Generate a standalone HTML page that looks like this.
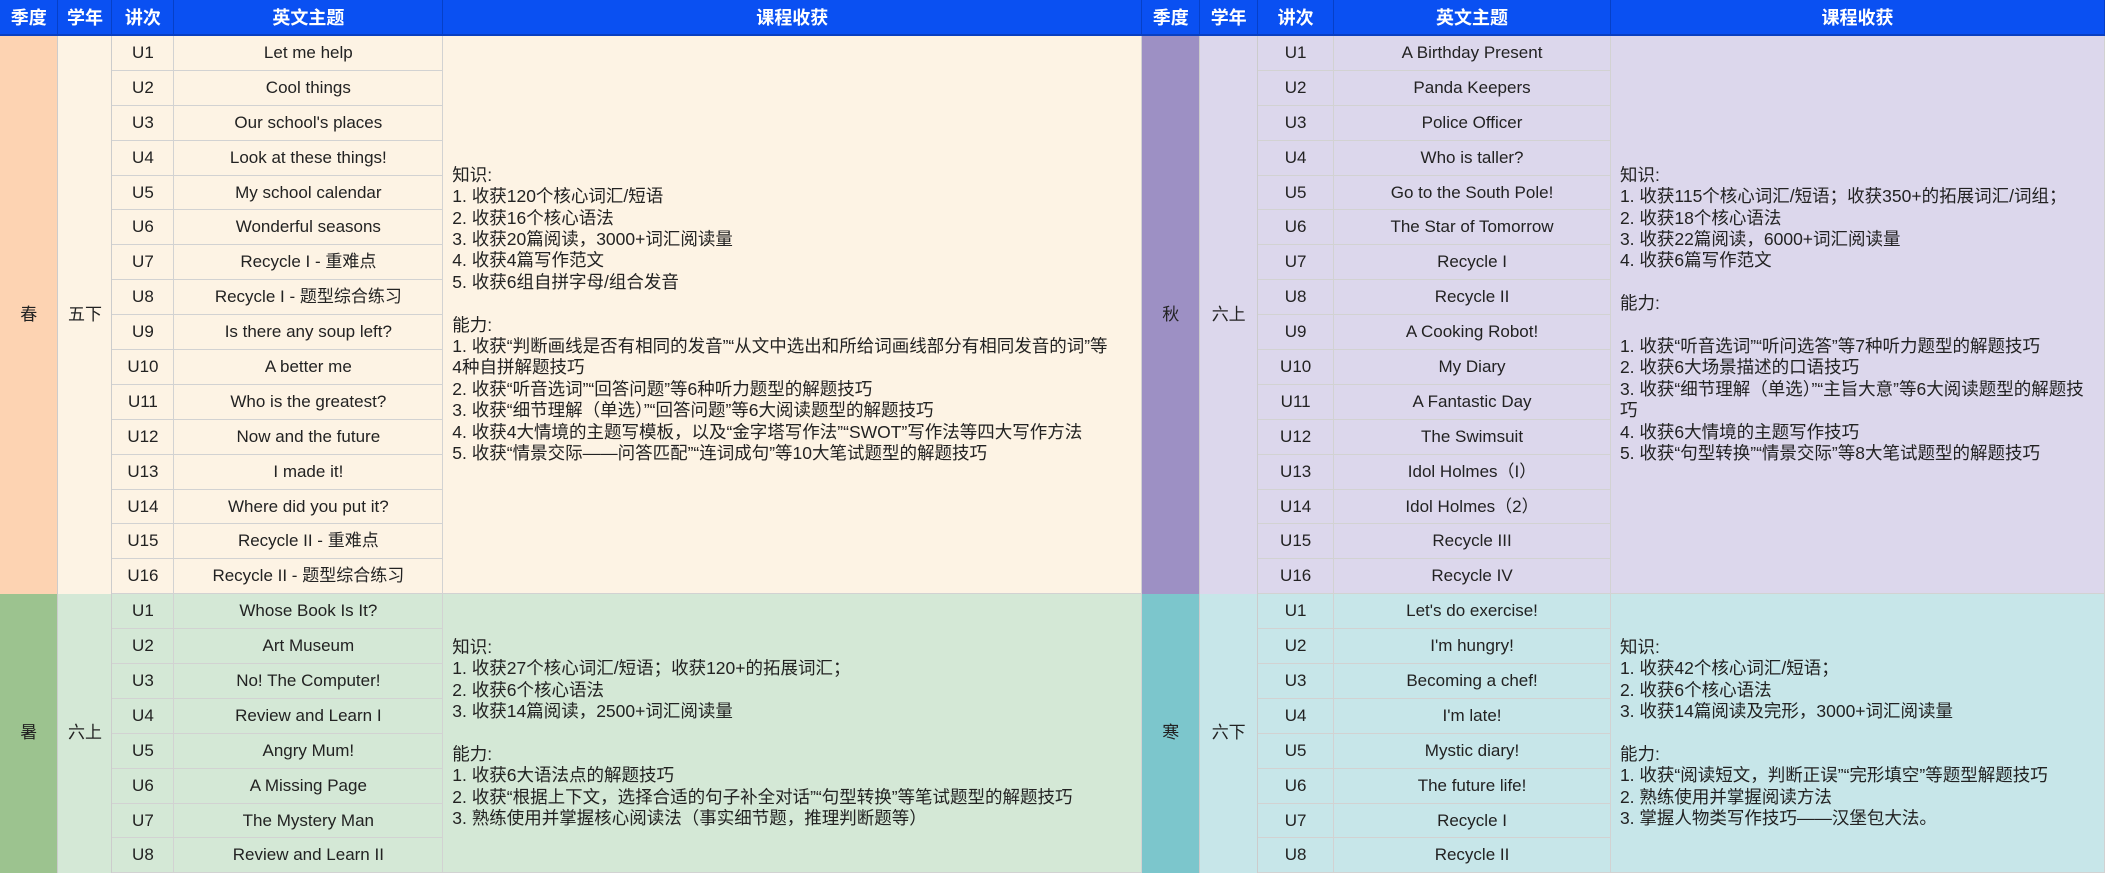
<!DOCTYPE html>
<html><head><meta charset="utf-8"><style>
html,body{margin:0;padding:0;width:2105px;height:873px;overflow:hidden;background:#fff}
table{border-collapse:collapse;table-layout:fixed;position:absolute;left:0;top:0;font-family:"Liberation Sans","Noto Sans CJK SC",sans-serif;font-size:17px;color:#222}
td,th{padding:0;text-align:center;vertical-align:middle;overflow:hidden;white-space:nowrap}
th{background:#0a50f2;color:#fff;font-weight:bold;font-size:18px;height:34px;border-right:1px solid #0640c8;border-bottom:2px solid #0a3fc0}
tr.r td{height:33.9px;line-height:20px;border:1px solid #d2d2d2}
tr.r td.h{text-align:left;padding-left:9px;line-height:21.4px;font-size:17.5px;white-space:nowrap;vertical-align:middle}
.sp{background:#fdf3e4}.sps{background:#fdd3b2}
.au{background:#dcd7ec}.aus{background:#9d90c4}
.su{background:#d4e8d6}.sus{background:#9cc38f}
.wi{background:#c7e6e9}.wis{background:#7cc6cc}
td.s{border:none!important;border-right:1px solid #ccc!important}
</style></head><body>
<table>
<colgroup><col style="width:58px"><col style="width:54px"><col style="width:62px"><col style="width:269px"><col style="width:699px"><col style="width:58px"><col style="width:58px"><col style="width:76px"><col style="width:277px"><col style="width:494px"></colgroup>
<tr><th>季度</th><th>学年</th><th>讲次</th><th>英文主题</th><th>课程收获</th><th>季度</th><th>学年</th><th>讲次</th><th>英文主题</th><th>课程收获</th></tr>
<tr class="r"><td rowspan="16" class="s sps">春</td><td rowspan="16" class="s sp">五下</td><td class="sp">U1</td><td class="sp">Let me help</td>
<td rowspan="16" class="h sp">知识:<br>1. 收获120个核心词汇/短语<br>2. 收获16个核心语法<br>3. 收获20篇阅读，3000+词汇阅读量<br>4. 收获4篇写作范文<br>5. 收获6组自拼字母/组合发音<br><br>能力:<br>1. 收获“判断画线是否有相同的发音”“从文中选出和所给词画线部分有相同发音的词”等<br>4种自拼解题技巧<br>2. 收获“听音选词”“回答问题”等6种听力题型的解题技巧<br>3. 收获“细节理解（单选）”“回答问题”等6大阅读题型的解题技巧<br>4. 收获4大情境的主题写模板，以及“金字塔写作法”“SWOT”写作法等四大写作方法<br>5. 收获“情景交际——问答匹配”“连词成句”等10大笔试题型的解题技巧</td>
<td rowspan="16" class="s aus">秋</td><td rowspan="16" class="s au">六上</td><td class="au">U1</td><td class="au">A Birthday Present</td>
<td rowspan="16" class="h au">知识:<br>1. 收获115个核心词汇/短语；收获350+的拓展词汇/词组；<br>2. 收获18个核心语法<br>3. 收获22篇阅读，6000+词汇阅读量<br>4. 收获6篇写作范文<br><br>能力:<br><br>1. 收获“听音选词”“听问选答”等7种听力题型的解题技巧<br>2. 收获6大场景描述的口语技巧<br>3. 收获“细节理解（单选）”“主旨大意”等6大阅读题型的解题技<br>巧<br>4. 收获6大情境的主题写作技巧<br>5. 收获“句型转换”“情景交际”等8大笔试题型的解题技巧</td></tr>
<tr class="r"><td class="sp">U2</td><td class="sp">Cool things</td><td class="au">U2</td><td class="au">Panda Keepers</td></tr>
<tr class="r"><td class="sp">U3</td><td class="sp">Our school's places</td><td class="au">U3</td><td class="au">Police Officer</td></tr>
<tr class="r"><td class="sp">U4</td><td class="sp">Look at these things!</td><td class="au">U4</td><td class="au">Who is taller?</td></tr>
<tr class="r"><td class="sp">U5</td><td class="sp">My school calendar</td><td class="au">U5</td><td class="au">Go to the South Pole!</td></tr>
<tr class="r"><td class="sp">U6</td><td class="sp">Wonderful seasons</td><td class="au">U6</td><td class="au">The Star of Tomorrow</td></tr>
<tr class="r"><td class="sp">U7</td><td class="sp">Recycle I - 重难点</td><td class="au">U7</td><td class="au">Recycle I</td></tr>
<tr class="r"><td class="sp">U8</td><td class="sp">Recycle I - 题型综合练习</td><td class="au">U8</td><td class="au">Recycle II</td></tr>
<tr class="r"><td class="sp">U9</td><td class="sp">Is there any soup left?</td><td class="au">U9</td><td class="au">A Cooking Robot!</td></tr>
<tr class="r"><td class="sp">U10</td><td class="sp">A better me</td><td class="au">U10</td><td class="au">My Diary</td></tr>
<tr class="r"><td class="sp">U11</td><td class="sp">Who is the greatest?</td><td class="au">U11</td><td class="au">A Fantastic Day</td></tr>
<tr class="r"><td class="sp">U12</td><td class="sp">Now and the future</td><td class="au">U12</td><td class="au">The Swimsuit</td></tr>
<tr class="r"><td class="sp">U13</td><td class="sp">I made it!</td><td class="au">U13</td><td class="au">Idol Holmes（I）</td></tr>
<tr class="r"><td class="sp">U14</td><td class="sp">Where did you put it?</td><td class="au">U14</td><td class="au">Idol Holmes（2）</td></tr>
<tr class="r"><td class="sp">U15</td><td class="sp">Recycle II - 重难点</td><td class="au">U15</td><td class="au">Recycle III</td></tr>
<tr class="r"><td class="sp">U16</td><td class="sp">Recycle II - 题型综合练习</td><td class="au">U16</td><td class="au">Recycle IV</td></tr>
<tr class="r"><td rowspan="8" class="s sus">暑</td><td rowspan="8" class="s su">六上</td><td class="su">U1</td><td class="su">Whose Book Is It?</td>
<td rowspan="8" class="h su">知识:<br>1. 收获27个核心词汇/短语；收获120+的拓展词汇；<br>2. 收获6个核心语法<br>3. 收获14篇阅读，2500+词汇阅读量<br><br>能力:<br>1. 收获6大语法点的解题技巧<br>2. 收获“根据上下文，选择合适的句子补全对话”“句型转换”等笔试题型的解题技巧<br>3. 熟练使用并掌握核心阅读法（事实细节题，推理判断题等）</td>
<td rowspan="8" class="s wis">寒</td><td rowspan="8" class="s wi">六下</td><td class="wi">U1</td><td class="wi">Let's do exercise!</td>
<td rowspan="8" class="h wi">知识:<br>1. 收获42个核心词汇/短语；<br>2. 收获6个核心语法<br>3. 收获14篇阅读及完形，3000+词汇阅读量<br><br>能力:<br>1. 收获“阅读短文，判断正误”“完形填空”等题型解题技巧<br>2. 熟练使用并掌握阅读方法<br>3. 掌握人物类写作技巧——汉堡包大法。</td></tr>
<tr class="r"><td class="su">U2</td><td class="su">Art Museum</td><td class="wi">U2</td><td class="wi">I'm hungry!</td></tr>
<tr class="r"><td class="su">U3</td><td class="su">No! The Computer!</td><td class="wi">U3</td><td class="wi">Becoming a chef!</td></tr>
<tr class="r"><td class="su">U4</td><td class="su">Review and Learn I</td><td class="wi">U4</td><td class="wi">I'm late!</td></tr>
<tr class="r"><td class="su">U5</td><td class="su">Angry Mum!</td><td class="wi">U5</td><td class="wi">Mystic diary!</td></tr>
<tr class="r"><td class="su">U6</td><td class="su">A Missing Page</td><td class="wi">U6</td><td class="wi">The future life!</td></tr>
<tr class="r"><td class="su">U7</td><td class="su">The Mystery Man</td><td class="wi">U7</td><td class="wi">Recycle I</td></tr>
<tr class="r"><td class="su">U8</td><td class="su">Review and Learn II</td><td class="wi">U8</td><td class="wi">Recycle II</td></tr>
</table>
</body></html>
